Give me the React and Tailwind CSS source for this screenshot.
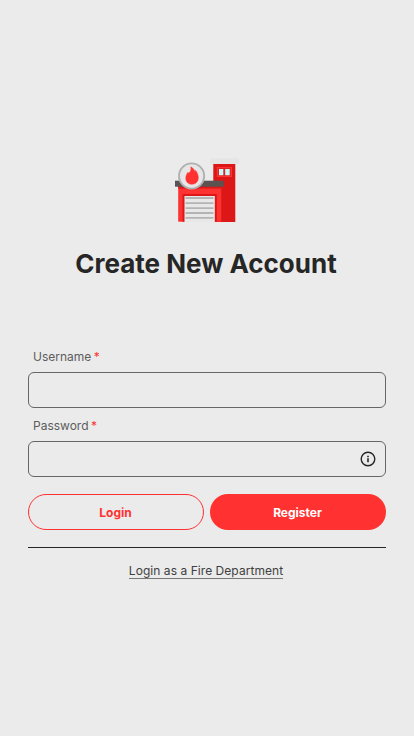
function FireStation() {
  return (
    <svg className="h-[72px] w-[72px]" viewBox="0 0 72 72" aria-hidden="true">
      <rect x="40" y="3.3" width="29" height="5.7" fill="#e5e5e5" />
      <rect x="43.3" y="9" width="22" height="58" fill="#dc1717" />
      <rect x="46.8" y="12" width="15.2" height="10" fill="#ff3131" />
      <rect x="48" y="13" width="12.8" height="8" fill="#e02222" />
      <path d="M49 14h4.3v6.3H49zM55.2 14h4.5v6.3h-4.5z" fill="#c5f8f8" />
      <rect x="8.2" y="31" width="43" height="35.7" fill="#ff3232" />
      <rect x="8.2" y="31" width="43" height="2.6" fill="#dc1919" />
      <rect x="5" y="25.7" width="48.7" height="6" fill="#5b5252" />
      <rect x="12.5" y="39" width="34.3" height="27.7" fill="#dc1717" />
      <rect x="14.5" y="41" width="30.3" height="26" fill="#e8e8e8" />
      <path d="M15.5 43h28M15.5 48.2h28M15.5 53.2h28M15.5 58h28M15.5 62.8h28" stroke="#b4b4b4" strokeWidth="1.8" />
      <circle cx="21.6" cy="21" r="12.6" fill="#e6e6e6" stroke="#b0b0b0" strokeWidth="1.9" />
      <path d="M20.8 11.8C23.6 13.4 24.8 15.4 25 17.2C25.5 16.6 25.5 16 25.4 15.2C27.4 17.4 28.3 20.2 28.3 22.8C28.3 26.8 25.6 29.2 22 29.2C18.2 29.2 15.8 26.8 15.8 23.4C15.8 20.6 16.8 19 18 17.2C18.1 17.8 18.4 18.1 18.8 18.3C20.6 16.6 21.4 14.4 20.8 11.8Z" fill="#ff3131" stroke="#ff3131" strokeWidth="0.5" strokeLinejoin="round" />
    </svg>
  );
}

function Field({ id, label, type, children }) {
  return (
    <div className="flex flex-col">
      <label htmlFor={id} className="mb-1.5 pl-[5px] text-[12px] leading-[18px] text-[#5c5c5c]">
        {label} <span className="-ml-px text-[#ff3131]">*</span>
      </label>
      <div className="flex h-9 items-center rounded-md border border-[#666666] pr-[9px]">
        <input id={id} type={type} className="min-w-0 flex-1 bg-transparent px-3 text-sm outline-none" />
        {children}
      </div>
    </div>
  );
}

export default function App() {
  return (
    <main className="flex min-h-screen flex-col bg-[#ebebeb] px-7 pt-[155px] font-['Inter',sans-serif] text-[#262626]">
      <div className="-ml-0.5 flex flex-col items-center">
        <FireStation />
        <h1 className="mt-[19px] text-[26px] leading-9 font-bold whitespace-nowrap">Create New Account</h1>
      </div>
      <form className="mt-[66px]">
        <div className="flex flex-col gap-[9px]">
          <Field id="username" label="Username" type="text" />
          <Field id="password" label="Password" type="password">
            <svg className="h-4 w-4" viewBox="0 0 16 16" aria-hidden="true">
              <circle cx="8" cy="8" r="6.8" fill="none" stroke="#262626" strokeWidth="1.4" />
              <path d="M7.2 4.7h1.6v1.5H7.2zM7.2 7.2h1.6v4H7.2z" fill="#262626" />
            </svg>
          </Field>
        </div>
        <div className="mt-[17px] grid grid-cols-2 gap-1.5 text-[12px] font-bold">
          <button type="button" className="h-9 rounded-full border border-[#ff3131] pt-px pr-px text-[#ff3131]">Login</button>
          <button type="button" className="h-9 rounded-full bg-[#ff3131] pt-px pr-px text-white">Register</button>
        </div>
      </form>
      <hr className="mt-[17px] border-[#262626]" />
      <div className="mt-[15px] flex justify-center pr-0.5">
        <a href="#" className="border-b border-[#777777] text-[12px] leading-[15px] tracking-[0.05px] text-[#404040]">Login as a Fire Department</a>
      </div>
    </main>
  );
}
